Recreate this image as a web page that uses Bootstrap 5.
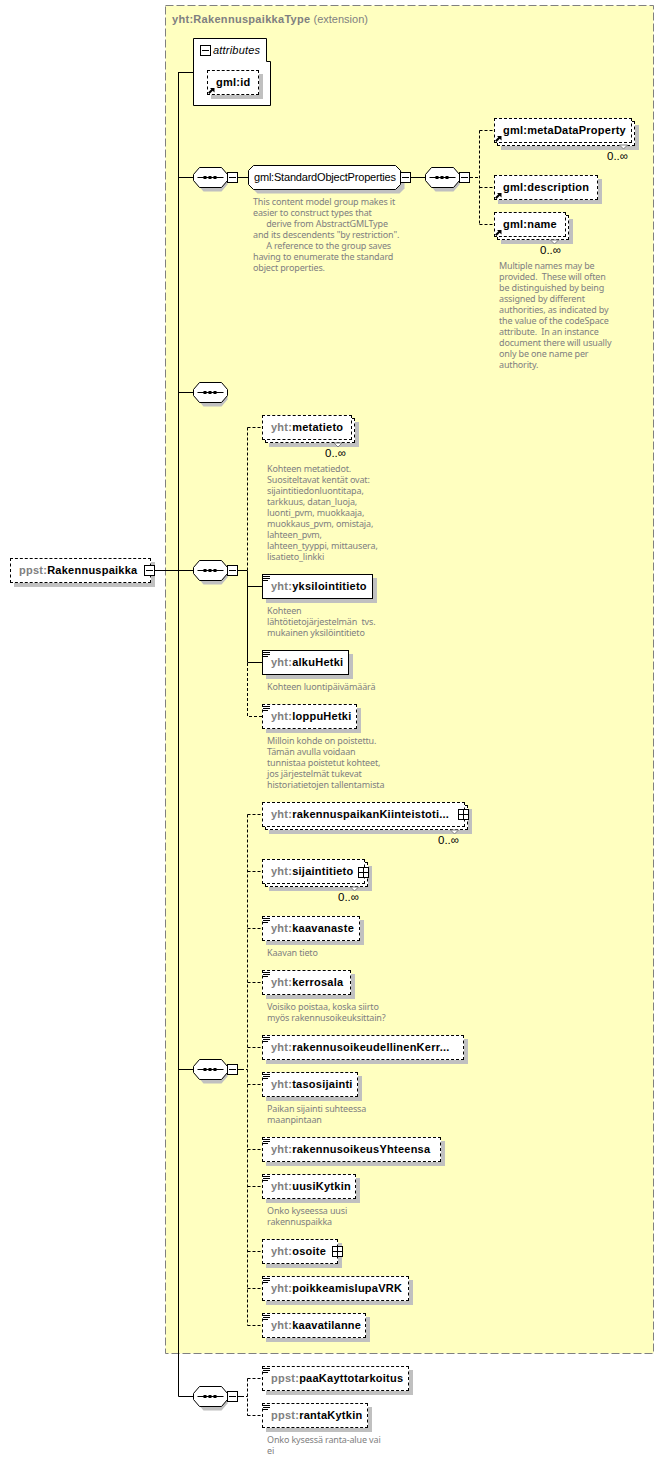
<!DOCTYPE html>
<html lang="fi">
<head>
<meta charset="utf-8">
<title>ppst:Rakennuspaikka</title>
<link href="https://cdn.jsdelivr.net/npm/bootstrap@5.3.0/dist/css/bootstrap.min.css" rel="stylesheet">
<style>
html,body{margin:0;background:#fff}
.dg-canvas{width:664px;height:1461px;font-family:"Liberation Sans",Arial,sans-serif;font-size:11px;color:#000}
.dg-layer{left:0;top:0}
.dg-node{height:25px;padding-left:8px;background:#fff;border:1px dashed #000;box-shadow:4px 4px 0 #c0c0c0;font-weight:700;white-space:nowrap;line-height:1;letter-spacing:.25px}
.dg-solid{border-style:solid}
.dg-pre{color:#808080}
.dg-back{height:25px;background:#fff;border:1px dashed #000;box-shadow:4px 4px 0 #c0c0c0}
.dg-plain{font-weight:400;white-space:nowrap;line-height:1;letter-spacing:-.2px}
.dg-italic{letter-spacing:.2px}
.dg-desc{font-family:"Noto Sans",sans-serif;font-size:9px;line-height:11px;color:#808080;white-space:pre;letter-spacing:-.15px}
.dg-occ{font-size:11.5px;line-height:12px;white-space:nowrap}
.dg-title{color:#808080;font-size:11px;line-height:14px;white-space:nowrap}
.dg-title strong{letter-spacing:.3px}
</style>
</head>
<body>
<div class="dg-canvas position-relative overflow-hidden">

<svg class="position-absolute dg-layer" width="664" height="1461" viewBox="0 0 664 1461">
  <defs>
    <g id="octa">
      <polygon points="4,-3 10,-10 28,-10 34,-3 34,3 28,10 10,10 4,3" transform="translate(0,4)" fill="#c0c0c0"/>
      <polygon points="0,-3 6,-10 28,-10 34,-3 34,3 28,10 6,10 0,3" fill="#fff" stroke="#000"/>
      <line x1="4" y1="0" x2="30" y2="0" stroke="#000"/>
      <rect x="10" y="-1.5" width="3" height="3" fill="#000"/>
      <rect x="15" y="-1.5" width="3" height="3" fill="#000"/>
      <rect x="20" y="-1.5" width="3" height="3" fill="#000"/>
    </g>
    <symbol id="ic-minus" viewBox="0 0 11 11"><rect x=".5" y=".5" width="10" height="10" fill="#fff" stroke="#000"/><path d="M2 5.5h7" stroke="#000"/></symbol>
    <symbol id="ic-plus" viewBox="0 0 11 11"><rect x=".5" y=".5" width="10" height="10" fill="#fff" stroke="#000"/><path d="M1 5.5h9M5.5 1v9" stroke="#000"/></symbol>
    <symbol id="ic-ref" viewBox="0 0 7 7"><path d="M.8 6.300 5 2" stroke="#000" stroke-width="2" fill="none"/><path d="M2 1h4.500v4.500z" fill="#000"/></symbol>
    <symbol id="ic-note" viewBox="0 0 7 6"><path d="M0 .5h7M0 2.500h7M0 4.500h5" stroke="#000"/></symbol>
  </defs>

  <!-- extension frame -->
  <rect x="165.500" y="5.500" width="488" height="1348" fill="#ffffc0" stroke="#808080" stroke-dasharray="8 3"/>

  <!-- solid connectors -->
  <g stroke="#000" fill="none">
    <path d="M178.500 72v1324.500"/>
    <path d="M178.500 72.500H193M178.500 177.500H193M178.500 392.500H193M155 570.500H193M178.500 1069.500H193M178.500 1396.500H193"/>
    <path d="M238 177.500H248M411 177.500H425"/>
    <path d="M238 570.500H247.500V662.500H262M247.500 586.500H262"/>
    <path d="M238 1069.500H241M238 1396.500H241"/>
  </g>
  <!-- dashed connectors -->
  <g stroke="#000" fill="none" stroke-dasharray="3 2">
    <path d="M470 177.500H479.500M479.500 130.500V224.500M479.500 130.500H494M479.500 187.500H494M479.500 224.500H494"/>
    <path d="M247.500 427.500V570M247.500 427.500H262M247.500 663V716.500H262"/>
    <path d="M247.500 814.500V1325.500M247.500 814.500H262M247.500 871.500H262M247.500 928.500H262M247.500 982.500H262M247.500 1047.500H262M247.500 1084.500H262M247.500 1149.500H262M247.500 1186.500H262M247.500 1251.500H262M247.500 1288.500H262M247.500 1325.500H262M241 1069.500H247.500"/>
    <path d="M247.500 1378.500V1415.500M247.500 1378.500H262M247.500 1415.500H262M241 1396.500H247.500"/>
  </g>

  <!-- attributes box -->
  <polygon points="193.500,38.500 266.500,38.500 266.500,61.500 270.500,61.500 270.500,105.500 193.500,105.500" fill="#fff" stroke="#000"/>

  <!-- compositors -->
  <use href="#octa" x="193.500" y="177.500"/>
  <use href="#octa" x="193.500" y="392.500"/>
  <use href="#octa" x="193.500" y="570.500"/>
  <use href="#octa" x="193.500" y="1069.500"/>
  <use href="#octa" x="193.500" y="1396.500"/>
  <use href="#octa" x="425.500" y="177.500"/>

  <!-- group -->
  <polygon points="252.500,169.500 399.500,169.500 404.500,174.500 404.500,188.500 399.500,193.500 257.500,193.500 252.500,188.500" fill="#c0c0c0"/>
  <polygon points="253.500,165.500 395.500,165.500 400.500,170.500 400.500,184.500 395.500,189.500 253.500,189.500 248.500,184.500 248.500,170.500" fill="#fff" stroke="#000"/>

  <!-- toggles on connectors -->
  <use href="#ic-minus" x="227" y="172" width="11" height="11"/>
  <use href="#ic-minus" x="227" y="565" width="11" height="11"/>
  <use href="#ic-minus" x="227" y="1064" width="11" height="11"/>
  <use href="#ic-minus" x="227" y="1391" width="11" height="11"/>
  <use href="#ic-minus" x="400" y="172" width="11" height="11"/>
  <use href="#ic-minus" x="459" y="172" width="11" height="11"/>
  <use href="#ic-minus" x="200" y="45" width="11" height="11"/>
</svg>

<!-- labels -->
<div class="dg-title position-absolute" style="left:172px;top:12px"><strong>yht:RakennuspaikkaType</strong> (extension)</div>
<div class="dg-plain dg-italic position-absolute fst-italic" style="left:213px;top:45px">attributes</div>
<div class="dg-plain position-absolute" style="left:254px;top:172px">gml:StandardObjectProperties</div>

<!-- root -->
<div class="dg-node position-absolute d-flex align-items-center" style="left:10px;top:558px;width:141px"><span class="dg-pre">ppst:</span>Rakennuspaikka</div>

<!-- attribute -->
<div class="dg-node position-absolute d-flex align-items-center" style="left:207px;top:70px;width:52px">gml:id</div>

<!-- gml elements -->
<div class="position-absolute" style="left:494px;top:118px;width:138px"><div class="dg-back position-absolute w-100" style="left:3px;top:3px"></div><div class="dg-node position-relative d-flex align-items-center shadow-none">gml:metaDataProperty</div></div>
<div class="dg-node position-absolute d-flex align-items-center" style="left:494px;top:175px;width:104px">gml:description</div>
<div class="position-absolute" style="left:494px;top:212px;width:72px"><div class="dg-back position-absolute w-100" style="left:3px;top:3px"></div><div class="dg-node position-relative d-flex align-items-center shadow-none">gml:name</div></div>

<!-- first yht group -->
<div class="position-absolute" style="left:262px;top:415px;width:90px"><div class="dg-back position-absolute w-100" style="left:3px;top:3px"></div><div class="dg-node position-relative d-flex align-items-center shadow-none"><span class="dg-pre">yht:</span>metatieto</div></div>
<div class="dg-node dg-solid position-absolute d-flex align-items-center" style="left:262px;top:574px;width:111px"><span class="dg-pre">yht:</span>yksilointitieto</div>
<div class="dg-node dg-solid position-absolute d-flex align-items-center" style="left:262px;top:650px;width:87px"><span class="dg-pre">yht:</span>alkuHetki</div>
<div class="dg-node position-absolute d-flex align-items-center" style="left:262px;top:704px;width:95px"><span class="dg-pre">yht:</span>loppuHetki</div>

<!-- second yht group -->
<div class="position-absolute" style="left:262px;top:802px;width:203px"><div class="dg-back position-absolute w-100" style="left:3px;top:3px"></div><div class="dg-node position-relative d-flex align-items-center shadow-none"><span class="dg-pre">yht:</span>rakennuspaikanKiinteistoti...</div></div>
<div class="position-absolute" style="left:262px;top:859px;width:103px"><div class="dg-back position-absolute w-100" style="left:3px;top:3px"></div><div class="dg-node position-relative d-flex align-items-center shadow-none"><span class="dg-pre">yht:</span>sijaintitieto</div></div>
<div class="dg-node position-absolute d-flex align-items-center" style="left:262px;top:916px;width:98px"><span class="dg-pre">yht:</span>kaavanaste</div>
<div class="dg-node position-absolute d-flex align-items-center" style="left:262px;top:970px;width:89px"><span class="dg-pre">yht:</span>kerrosala</div>
<div class="dg-node position-absolute d-flex align-items-center" style="left:262px;top:1035px;width:202px"><span class="dg-pre">yht:</span>rakennusoikeudellinenKerr...</div>
<div class="dg-node position-absolute d-flex align-items-center" style="left:262px;top:1072px;width:96px"><span class="dg-pre">yht:</span>tasosijainti</div>
<div class="dg-node position-absolute d-flex align-items-center" style="left:262px;top:1137px;width:179px"><span class="dg-pre">yht:</span>rakennusoikeusYhteensa</div>
<div class="dg-node position-absolute d-flex align-items-center" style="left:262px;top:1174px;width:94px"><span class="dg-pre">yht:</span>uusiKytkin</div>
<div class="dg-node position-absolute d-flex align-items-center" style="left:262px;top:1239px;width:76px"><span class="dg-pre">yht:</span>osoite</div>
<div class="dg-node position-absolute d-flex align-items-center" style="left:262px;top:1276px;width:147px"><span class="dg-pre">yht:</span>poikkeamislupaVRK</div>
<div class="dg-node position-absolute d-flex align-items-center" style="left:262px;top:1313px;width:104px"><span class="dg-pre">yht:</span>kaavatilanne</div>

<!-- ppst group -->
<div class="dg-node position-absolute d-flex align-items-center" style="left:262px;top:1366px;width:147px"><span class="dg-pre">ppst:</span>paaKayttotarkoitus</div>
<div class="dg-node position-absolute d-flex align-items-center" style="left:262px;top:1403px;width:106px"><span class="dg-pre">ppst:</span>rantaKytkin</div>

<!-- occurrences -->
<div class="dg-occ position-absolute" style="left:607px;top:150px">0..∞</div>
<div class="dg-occ position-absolute" style="left:540px;top:244px">0..∞</div>
<div class="dg-occ position-absolute" style="left:325px;top:447px">0..∞</div>
<div class="dg-occ position-absolute" style="left:438px;top:834px">0..∞</div>
<div class="dg-occ position-absolute" style="left:338px;top:891px">0..∞</div>

<!-- annotations -->
<div class="dg-desc position-absolute" style="left:253px;top:196px">This content model group makes it
easier to construct types that
      derive from AbstractGMLType
and its descendents "by restriction".
      A reference to the group saves
having to enumerate the standard
object properties.</div>
<div class="dg-desc position-absolute" style="left:499px;top:260px">Multiple names may be
provided.  These will often
be distinguished by being
assigned by different
authorities, as indicated by
the value of the codeSpace
attribute.  In an instance
document there will usually
only be one name per
authority.</div>
<div class="dg-desc position-absolute" style="left:267px;top:463px">Kohteen metatiedot.
Suositeltavat kentät ovat:
sijaintitiedonluontitapa,
tarkkuus, datan_luoja,
luonti_pvm, muokkaaja,
muokkaus_pvm, omistaja,
lahteen_pvm,
lahteen_tyyppi, mittausera,
lisatieto_linkki</div>
<div class="dg-desc position-absolute" style="left:267px;top:605px">Kohteen
lähtötietojärjestelmän  tvs.
mukainen yksilöintitieto</div>
<div class="dg-desc position-absolute" style="left:267px;top:681px">Kohteen luontipäivämäärä</div>
<div class="dg-desc position-absolute" style="left:267px;top:735px">Milloin kohde on poistettu.
Tämän avulla voidaan
tunnistaa poistetut kohteet,
jos järjestelmät tukevat
historiatietojen tallentamista</div>
<div class="dg-desc position-absolute" style="left:267px;top:947px">Kaavan tieto</div>
<div class="dg-desc position-absolute" style="left:267px;top:1001px">Voisiko poistaa, koska siirto
myös rakennusoikeuksittain?</div>
<div class="dg-desc position-absolute" style="left:267px;top:1103px">Paikan sijainti suhteessa
maanpintaan</div>
<div class="dg-desc position-absolute" style="left:267px;top:1205px">Onko kyseessa uusi
rakennuspaikka</div>
<div class="dg-desc position-absolute" style="left:267px;top:1434px">Onko kysessä ranta-alue vai
ei</div>

<!-- icons over the nodes -->
<svg class="position-absolute dg-layer" width="664" height="1461" viewBox="0 0 664 1461">
  <use href="#ic-minus" x="144" y="565" width="11" height="11"/>
  <use href="#ic-plus" x="458" y="809" width="11" height="11"/>
  <use href="#ic-plus" x="358" y="867" width="11" height="11"/>
  <use href="#ic-plus" x="332" y="1246" width="11" height="11"/>
  <use href="#ic-ref" x="208" y="87" width="7" height="7"/>
  <use href="#ic-ref" x="495" y="135" width="7" height="7"/>
  <use href="#ic-ref" x="495" y="192" width="7" height="7"/>
  <use href="#ic-ref" x="495" y="229" width="7" height="7"/>
  <use href="#ic-note" x="263" y="576" width="7" height="6"/>
  <use href="#ic-note" x="263" y="652" width="7" height="6"/>
  <use href="#ic-note" x="263" y="706" width="7" height="6"/>
  <use href="#ic-note" x="263" y="918" width="7" height="6"/>
  <use href="#ic-note" x="263" y="972" width="7" height="6"/>
  <use href="#ic-note" x="263" y="1037" width="7" height="6"/>
  <use href="#ic-note" x="263" y="1074" width="7" height="6"/>
  <use href="#ic-note" x="263" y="1139" width="7" height="6"/>
  <use href="#ic-note" x="263" y="1176" width="7" height="6"/>
  <use href="#ic-note" x="263" y="1278" width="7" height="6"/>
  <use href="#ic-note" x="263" y="1315" width="7" height="6"/>
  <use href="#ic-note" x="263" y="1368" width="7" height="6"/>
  <use href="#ic-note" x="263" y="1405" width="7" height="6"/>
  <g fill="#fff" stroke="#808080">
    <polygon points="619.500,145 627.500,145 623.500,149"/>
    <polygon points="550.500,240 558.500,240 554.500,244"/>
    <polygon points="334,443 342,443 338,447"/>
    <polygon points="450.500,830 458.500,830 454.500,834"/>
    <polygon points="350.500,887 358.500,887 354.500,891"/>
  </g>
</svg>
</div>
<script src="https://cdn.jsdelivr.net/npm/bootstrap@5.3.0/dist/js/bootstrap.bundle.min.js"></script>
</body>
</html>
